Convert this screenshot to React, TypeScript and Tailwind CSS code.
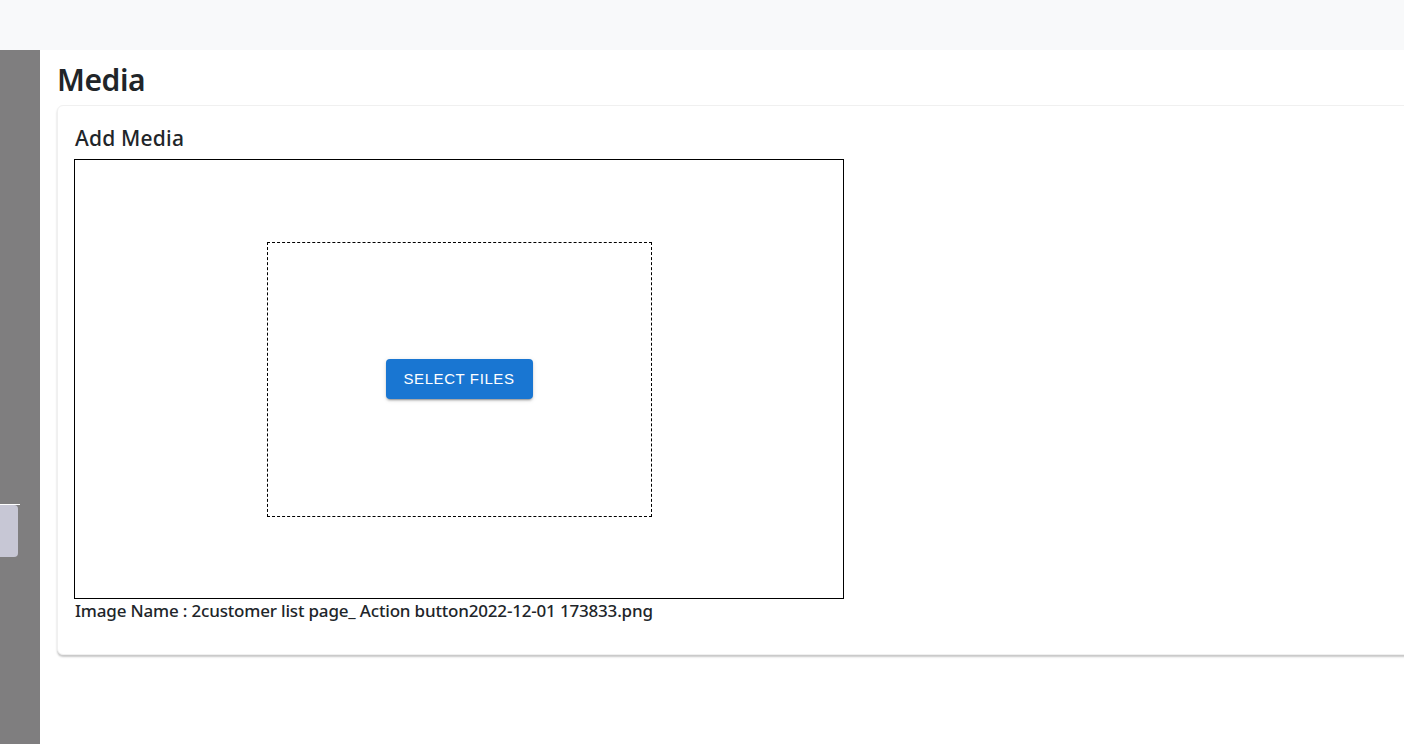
import React from "react";

const App = () => {
    return (
        <div className="w-full h-[744px] flex flex-col bg-white overflow-hidden font-['Noto_Sans',sans-serif] text-[#212529]">
            {/* top bar */}
            <div className="w-full h-[50px] shrink-0 bg-[#f8f9fa]" />

            <div className="flex-1 flex">
                {/* collapsed sidebar under overlay */}
                <div className="w-10 shrink-0 bg-[#7f7e7f] flex flex-col pt-[454px]">
                    <div className="w-5 h-px bg-white" />
                    <div className="w-[18px] h-[52px] bg-[#c7c7d5] rounded-r-[4px]" />
                </div>

                <div className="flex-1 flex flex-col pl-[17px] pt-[11px] min-w-0">
                    <h1 className="text-[30px] leading-[38px] font-semibold tracking-[-0.4px] mb-[6px]">Media</h1>

                    <div className="w-[1400px] h-[550px] shrink-0 bg-white rounded-[6px] border border-[#f0f0f0] shadow-[0_2px_2px_rgba(0,0,0,0.22)] pl-[16px] pt-[18px]">
                        <h2 className="text-[21px] leading-[28px] font-medium tracking-[0.2px] mb-[7px] pl-px">Add Media</h2>

                        <div className="w-[770px] h-[440px] border border-black flex items-center justify-center">
                            <div className="w-[385px] h-[275px] border border-dashed border-black flex items-center justify-center">
                                <button className="w-[147px] h-10 bg-[#1976d2] text-white rounded-[4px] text-[15px] tracking-[0.6px] uppercase font-['Liberation_Sans',sans-serif] shadow-[0_3px_1px_-2px_rgba(0,0,0,0.2),0_2px_2px_0_rgba(0,0,0,0.14),0_1px_5px_0_rgba(0,0,0,0.12)]">
                                    Select Files
                                </button>
                            </div>
                        </div>

                        <p className="text-[17px] leading-[22px] mt-px font-medium tracking-[-0.18px] pl-px">
                            Image Name : 2customer list page_ Action button2022-12-01 173833.png
                        </p>
                    </div>
                </div>
            </div>
        </div>
    );
};

export default App;
